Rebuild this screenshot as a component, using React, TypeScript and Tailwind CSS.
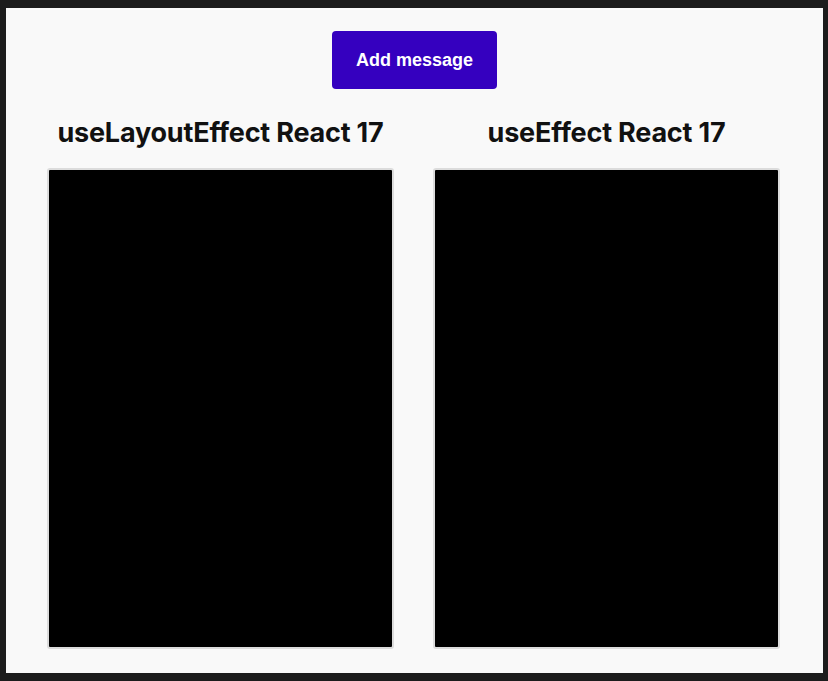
export default function App() {
  return (
    <div className="h-[681px] w-[828px] bg-[#1c1c1c] pt-[8px] pl-[6px] pr-[5px] pb-[8px]">
      <div className="h-full w-full bg-[#f9f9f9] flex flex-col items-center">
        <button className="mt-[23px] w-[165px] h-[58px] rounded-[4px] bg-[#3500bf] text-white text-[18px] font-bold font-['Liberation_Sans',Arial,sans-serif] pt-[1px]">
          Add message
        </button>
        <div className="mt-[28px] flex gap-[39px] pl-[41px] w-full">
          {["useLayoutEffect React 17", "useEffect React 17"].map((t) => (
            <div key={t} className="w-[347px] flex flex-col items-center">
              <h2 className="h-[32px] leading-[32px] text-[27px] font-bold text-[#111] font-['Inter',sans-serif] tracking-[-0.2px] whitespace-nowrap">
                {t}
              </h2>
              <div className="mt-[19px] w-[347px] h-[481px] bg-black rounded-[3px] border-2 border-[#dcdcdc]" />
            </div>
          ))}
        </div>
      </div>
    </div>
  );
}
